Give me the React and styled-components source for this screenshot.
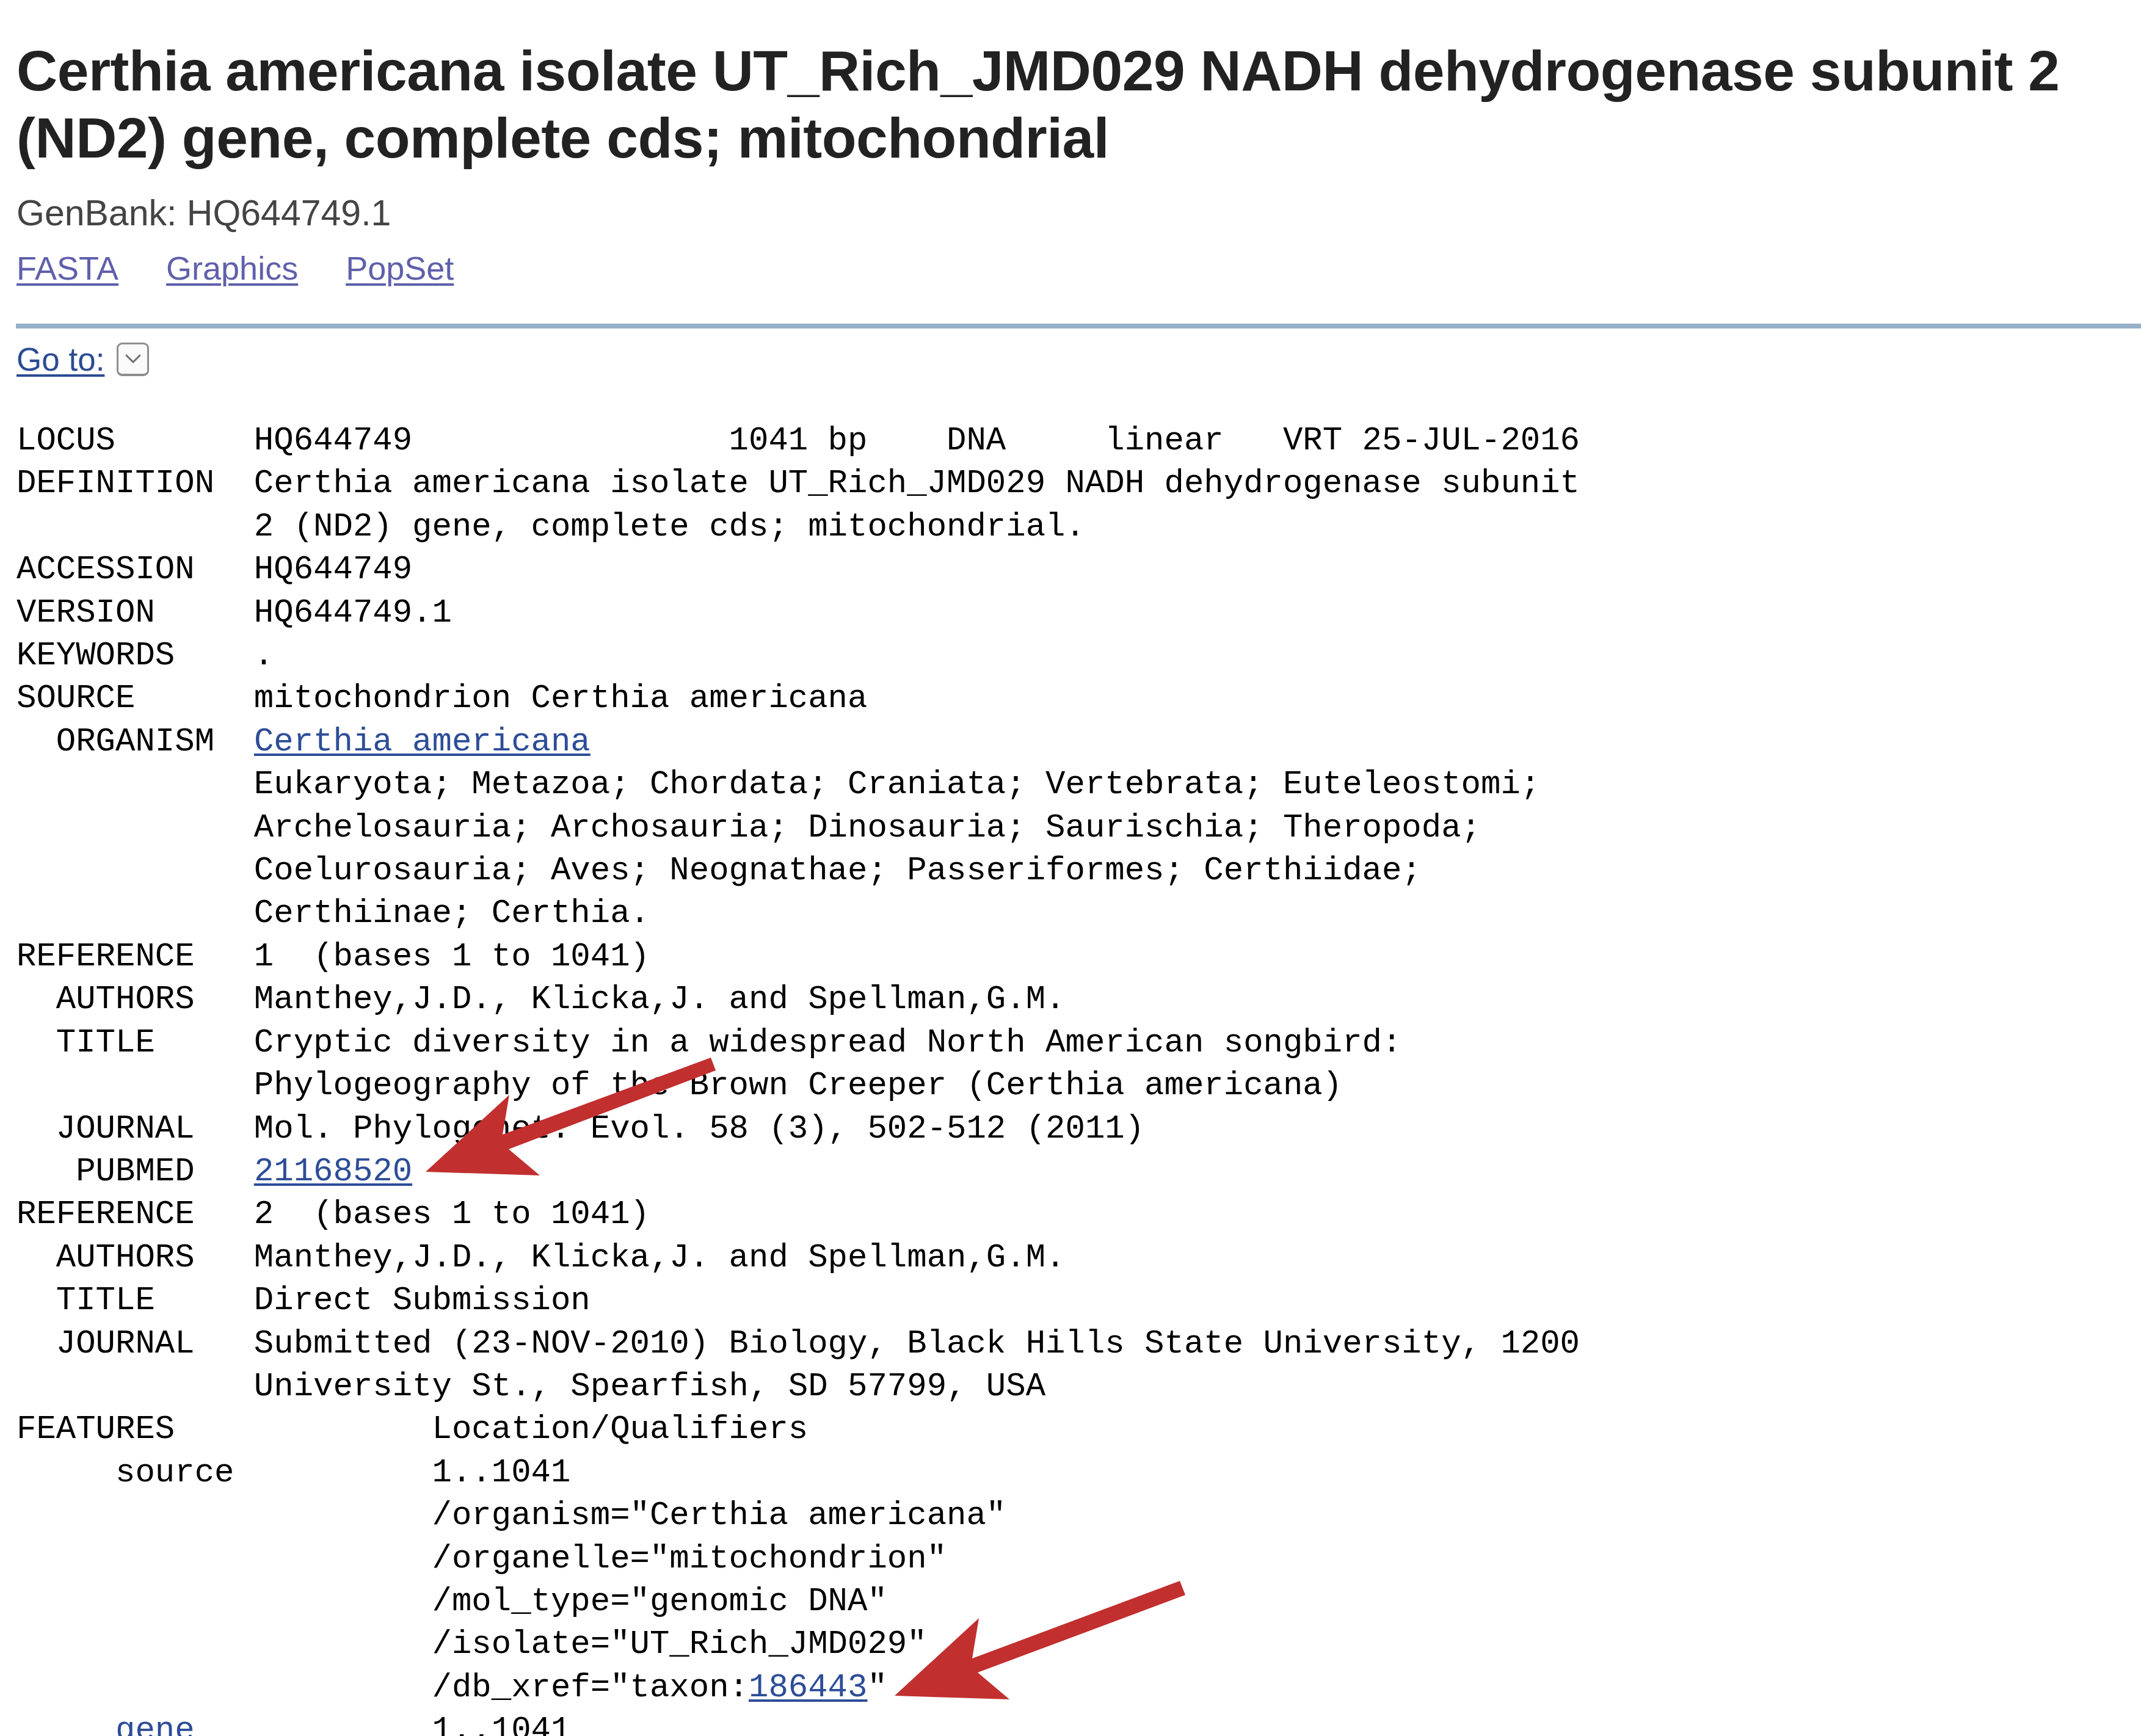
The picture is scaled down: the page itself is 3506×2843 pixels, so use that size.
import React from "react";
import styled, { createGlobalStyle } from "styled-components";

const GlobalStyle = createGlobalStyle`
  html, body {
    margin: 0;
    padding: 0;
    background: #fff;
  }
  body {
    font-family: "Liberation Sans", Arial, sans-serif;
    overflow: hidden;
  }
`;

const Page = styled.div`
  position: relative;
  padding: 61px 0 0 27px;
  min-height: 2843px;
  box-sizing: border-box;
`;

const Title = styled.h1`
  margin: 0;
  font-size: 93px;
  line-height: 110px;
  letter-spacing: -0.5px;
  font-weight: bold;
  color: #222;
`;

const Accession = styled.p`
  margin: 35px 0 0;
  font-size: 59px;
  line-height: 67px;
  color: #444;
`;

const LinkBar = styled.div`
  display: flex;
  gap: 78px;
  margin-top: 26px;
  font-size: 54px;
  line-height: 61px;
`;

const BarLink = styled.a`
  color: #6060ab;
  text-decoration: underline;
  text-underline-offset: 6px;
  text-decoration-thickness: 4px;
`;

const Rule = styled.hr`
  margin: 60px 0 0 -1px;
  border: 0;
  height: 8px;
  background: #97afc8;
`;

const GoToRow = styled.div`
  display: flex;
  align-items: center;
  margin-top: 20px;
  height: 60px;
  font-size: 53px;
`;

const GoToLink = styled.a`
  color: #2b4b93;
  text-decoration: underline;
  text-underline-offset: 6px;
  text-decoration-thickness: 4px;
`;

const DropBox = styled.span`
  display: inline-flex;
  align-items: center;
  justify-content: center;
  box-sizing: border-box;
  width: 53px;
  height: 55px;
  margin-left: 20px;
  border: 3px solid #8e8e8e;
  border-bottom-width: 4px;
  border-radius: 9px;
  background: #fafafa;
`;

const Record = styled.div`
  margin-top: 69px;
  font-family: "Liberation Mono", "Courier New", monospace;
  font-size: 54px;
  line-height: 70.4px;
  color: #000;
`;

const Line = styled.div`
  white-space: pre;
`;

const RecLink = styled.a`
  color: #2d4d98;
  text-decoration: underline;
  text-underline-offset: 5px;
  text-decoration-thickness: 4px;
`;

const Overlay = styled.svg`
  position: absolute;
  top: 0;
  left: 0;
  pointer-events: none;
`;

const L = (text) => ({ link: text });

const record = [
  ["LOCUS       HQ644749                1041 bp    DNA     linear   VRT 25-JUL-2016"],
  ["DEFINITION  Certhia americana isolate UT_Rich_JMD029 NADH dehydrogenase subunit"],
  ["            2 (ND2) gene, complete cds; mitochondrial."],
  ["ACCESSION   HQ644749"],
  ["VERSION     HQ644749.1"],
  ["KEYWORDS    ."],
  ["SOURCE      mitochondrion Certhia americana"],
  ["  ORGANISM  ", L("Certhia americana")],
  ["            Eukaryota; Metazoa; Chordata; Craniata; Vertebrata; Euteleostomi;"],
  ["            Archelosauria; Archosauria; Dinosauria; Saurischia; Theropoda;"],
  ["            Coelurosauria; Aves; Neognathae; Passeriformes; Certhiidae;"],
  ["            Certhiinae; Certhia."],
  ["REFERENCE   1  (bases 1 to 1041)"],
  ["  AUTHORS   Manthey,J.D., Klicka,J. and Spellman,G.M."],
  ["  TITLE     Cryptic diversity in a widespread North American songbird:"],
  ["            Phylogeography of the Brown Creeper (Certhia americana)"],
  ["  JOURNAL   Mol. Phylogenet. Evol. 58 (3), 502-512 (2011)"],
  ["   PUBMED   ", L("21168520")],
  ["REFERENCE   2  (bases 1 to 1041)"],
  ["  AUTHORS   Manthey,J.D., Klicka,J. and Spellman,G.M."],
  ["  TITLE     Direct Submission"],
  ["  JOURNAL   Submitted (23-NOV-2010) Biology, Black Hills State University, 1200"],
  ["            University St., Spearfish, SD 57799, USA"],
  ["FEATURES             Location/Qualifiers"],
  ["     source          1..1041"],
  ['                     /organism="Certhia americana"'],
  ['                     /organelle="mitochondrion"'],
  ['                     /mol_type="genomic DNA"'],
  ['                     /isolate="UT_Rich_JMD029"'],
  ['                     /db_xref="taxon:', L("186443"), '"'],
  ["     ", L("gene"), "            1..1041"],
];

// red annotation arrows drawn on top of the screenshot
const arrows = [
  "1164,1732 823,1858 834,1793 697,1919 884,1925 833,1882 1172,1753",
  "1932,2589 1592,2716 1603,2650 1465,2777 1653,2783 1601,2739 1941,2612",
];

const App = () => {
  return (
    <>
      <GlobalStyle />
      <Page>
        <Title>
          Certhia americana isolate UT_Rich_JMD029 NADH dehydrogenase subunit 2
          (ND2) gene, complete cds; mitochondrial
        </Title>
        <Accession>GenBank: HQ644749.1</Accession>
        <LinkBar>
          <BarLink href="#">FASTA</BarLink>
          <BarLink href="#">Graphics</BarLink>
          <BarLink href="#">PopSet</BarLink>
        </LinkBar>
        <Rule />
        <GoToRow>
          <GoToLink href="#">Go to:</GoToLink>
          <DropBox>
            <svg width="32" height="22" viewBox="0 0 32 22">
              <path
                d="M5 5 L16 16 L27 5"
                fill="none"
                stroke="#707070"
                strokeWidth="3"
                strokeLinecap="round"
                strokeLinejoin="round"
              />
            </svg>
          </DropBox>
        </GoToRow>
        <Record>
          {record.map((parts, i) => (
            <Line key={i}>
              {parts.map((p, j) =>
                typeof p === "string" ? (
                  p
                ) : (
                  <RecLink key={j} href="#">
                    {p.link}
                  </RecLink>
                )
              )}
            </Line>
          ))}
        </Record>
        <Overlay width="3506" height="2843" viewBox="0 0 3506 2843">
          {arrows.map((pts, i) => (
            <polygon key={i} points={pts} fill="#c12f2f" />
          ))}
        </Overlay>
      </Page>
    </>
  );
};

export default App;
